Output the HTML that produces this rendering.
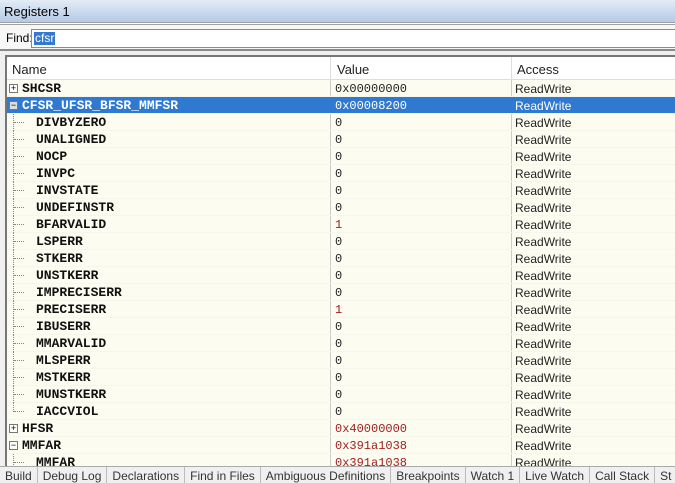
<!DOCTYPE html>
<html><head><style>
*{margin:0;padding:0;box-sizing:border-box}
body{width:675px;height:481px;overflow:hidden;background:#f0f0f0;font-family:"Liberation Sans",sans-serif;font-size:12px;position:relative}
.title{position:absolute;left:0;top:0;width:675px;height:22px;background:linear-gradient(#e4ecf6,#b4cae6);color:#000;padding:4px 0 0 4px;font-size:13px}
.l1{position:absolute;left:0;top:22px;width:675px;height:3px;border-top:1px solid #a0a0a0;border-bottom:1px solid #a0a0a0;background:#fff}
.find{position:absolute;left:0;top:25px;width:675px;height:26px;background:#f7f7f7;border-bottom:2px solid #8a8a8a}
.find span{position:absolute;left:6px;top:6px}
.inp{position:absolute;left:31px;top:4px;width:650px;height:19px;background:#fff;border:1px solid #8a8a8a}
.inp b{position:absolute;left:2px;top:2px;background:#3279d0;color:#fff;font-weight:normal;padding:0 1px;line-height:13px}
.tbl{position:absolute;left:5px;top:55px;width:675px;height:411px;border-left:2px solid #777;border-top:2px solid #777;background:#fcfcf0;overflow:hidden}
.hdr{height:23px;background:#fff;border-bottom:1px solid #ddd;position:relative;font-size:13px;color:#222}
.hdr span{position:absolute;top:5px}
.row{height:17px;position:relative;line-height:18px;border-bottom:1px solid #f6f6ec}
.row .n{position:absolute;left:15px;font-family:"Liberation Mono",monospace;font-weight:bold;font-size:13px;color:#111}
.row .c{position:absolute;left:29px;font-family:"Liberation Mono",monospace;font-weight:bold;font-size:13px;color:#111}
.row .v{position:absolute;left:328px;font-family:"Liberation Mono",monospace;font-size:12px;color:#222}
.row .a{position:absolute;left:508px;font-size:12px;color:#222}
.red{color:#a02020!important}
.sel{background:#3079d0}
.sel .n,.sel .v,.sel .a{color:#fff!important}
.vl{position:absolute;top:0;bottom:0;width:1px;background:#ccc}
.box{position:absolute;left:2px;top:4px;width:9px;height:9px;border:1px solid #777;background:#fff;font-size:9px;line-height:7px;text-align:center;color:#000}
.sel .box{background:#ddd}
.tr{position:absolute;left:6px;top:0;height:17px;border-left:1px dotted #888}
.th{position:absolute;left:7px;top:8px;width:10px;border-top:1px dotted #888}
.tabs{position:absolute;left:0;top:466px;width:675px;height:15px;background:#f0f0f0;border-top:1px solid #aaa;font-size:12px;color:#333;white-space:nowrap}
.tabs span{display:inline-block;padding:2px 5px 0 5px;border-right:1px solid #bbb;line-height:14px}
</style></head><body>
<div class="title">Registers 1</div>
<div class="l1"></div>
<div class="find"><span>Find:</span><div class="inp"><b>cfsr</b></div></div>
<div class="tbl">
<div class="hdr"><span style="left:5px">Name</span><span style="left:330px">Value</span><span style="left:510px">Access</span><div class="vl" style="left:323px;background:#ddd"></div><div class="vl" style="left:504px;background:#ddd"></div></div>
<div style="position:relative">
<div class="vl" style="left:323px;height:400px"></div><div class="vl" style="left:504px;height:400px"></div>
<div class="row"><div class="box">+</div><span class="n">SHCSR</span><span class="v">0x00000000</span><span class="a">ReadWrite</span></div>
<div class="row sel"><div class="box">−</div><span class="n">CFSR_UFSR_BFSR_MMFSR</span><span class="v">0x00008200</span><span class="a">ReadWrite</span></div>
<div class="row"><div class="tr"></div><div class="th"></div><span class="c">DIVBYZERO</span><span class="v">0</span><span class="a">ReadWrite</span></div>
<div class="row"><div class="tr"></div><div class="th"></div><span class="c">UNALIGNED</span><span class="v">0</span><span class="a">ReadWrite</span></div>
<div class="row"><div class="tr"></div><div class="th"></div><span class="c">NOCP</span><span class="v">0</span><span class="a">ReadWrite</span></div>
<div class="row"><div class="tr"></div><div class="th"></div><span class="c">INVPC</span><span class="v">0</span><span class="a">ReadWrite</span></div>
<div class="row"><div class="tr"></div><div class="th"></div><span class="c">INVSTATE</span><span class="v">0</span><span class="a">ReadWrite</span></div>
<div class="row"><div class="tr"></div><div class="th"></div><span class="c">UNDEFINSTR</span><span class="v">0</span><span class="a">ReadWrite</span></div>
<div class="row"><div class="tr"></div><div class="th"></div><span class="c">BFARVALID</span><span class="v red">1</span><span class="a">ReadWrite</span></div>
<div class="row"><div class="tr"></div><div class="th"></div><span class="c">LSPERR</span><span class="v">0</span><span class="a">ReadWrite</span></div>
<div class="row"><div class="tr"></div><div class="th"></div><span class="c">STKERR</span><span class="v">0</span><span class="a">ReadWrite</span></div>
<div class="row"><div class="tr"></div><div class="th"></div><span class="c">UNSTKERR</span><span class="v">0</span><span class="a">ReadWrite</span></div>
<div class="row"><div class="tr"></div><div class="th"></div><span class="c">IMPRECISERR</span><span class="v">0</span><span class="a">ReadWrite</span></div>
<div class="row"><div class="tr"></div><div class="th"></div><span class="c">PRECISERR</span><span class="v red">1</span><span class="a">ReadWrite</span></div>
<div class="row"><div class="tr"></div><div class="th"></div><span class="c">IBUSERR</span><span class="v">0</span><span class="a">ReadWrite</span></div>
<div class="row"><div class="tr"></div><div class="th"></div><span class="c">MMARVALID</span><span class="v">0</span><span class="a">ReadWrite</span></div>
<div class="row"><div class="tr"></div><div class="th"></div><span class="c">MLSPERR</span><span class="v">0</span><span class="a">ReadWrite</span></div>
<div class="row"><div class="tr"></div><div class="th"></div><span class="c">MSTKERR</span><span class="v">0</span><span class="a">ReadWrite</span></div>
<div class="row"><div class="tr"></div><div class="th"></div><span class="c">MUNSTKERR</span><span class="v">0</span><span class="a">ReadWrite</span></div>
<div class="row"><div class="tr" style="height:9px"></div><div class="th"></div><span class="c">IACCVIOL</span><span class="v">0</span><span class="a">ReadWrite</span></div>
<div class="row"><div class="box">+</div><span class="n">HFSR</span><span class="v red">0x40000000</span><span class="a">ReadWrite</span></div>
<div class="row"><div class="box">−</div><span class="n">MMFAR</span><span class="v red">0x391a1038</span><span class="a">ReadWrite</span></div>
<div class="row"><div class="tr"></div><div class="th"></div><span class="c">MMFAR</span><span class="v red">0x391a1038</span><span class="a">ReadWrite</span></div>
</div></div>
<div class="tabs"><span>Build</span><span>Debug Log</span><span>Declarations</span><span>Find in Files</span><span>Ambiguous Definitions</span><span>Breakpoints</span><span>Watch 1</span><span>Live Watch</span><span>Call Stack</span><span>St</span></div>
</body></html>
